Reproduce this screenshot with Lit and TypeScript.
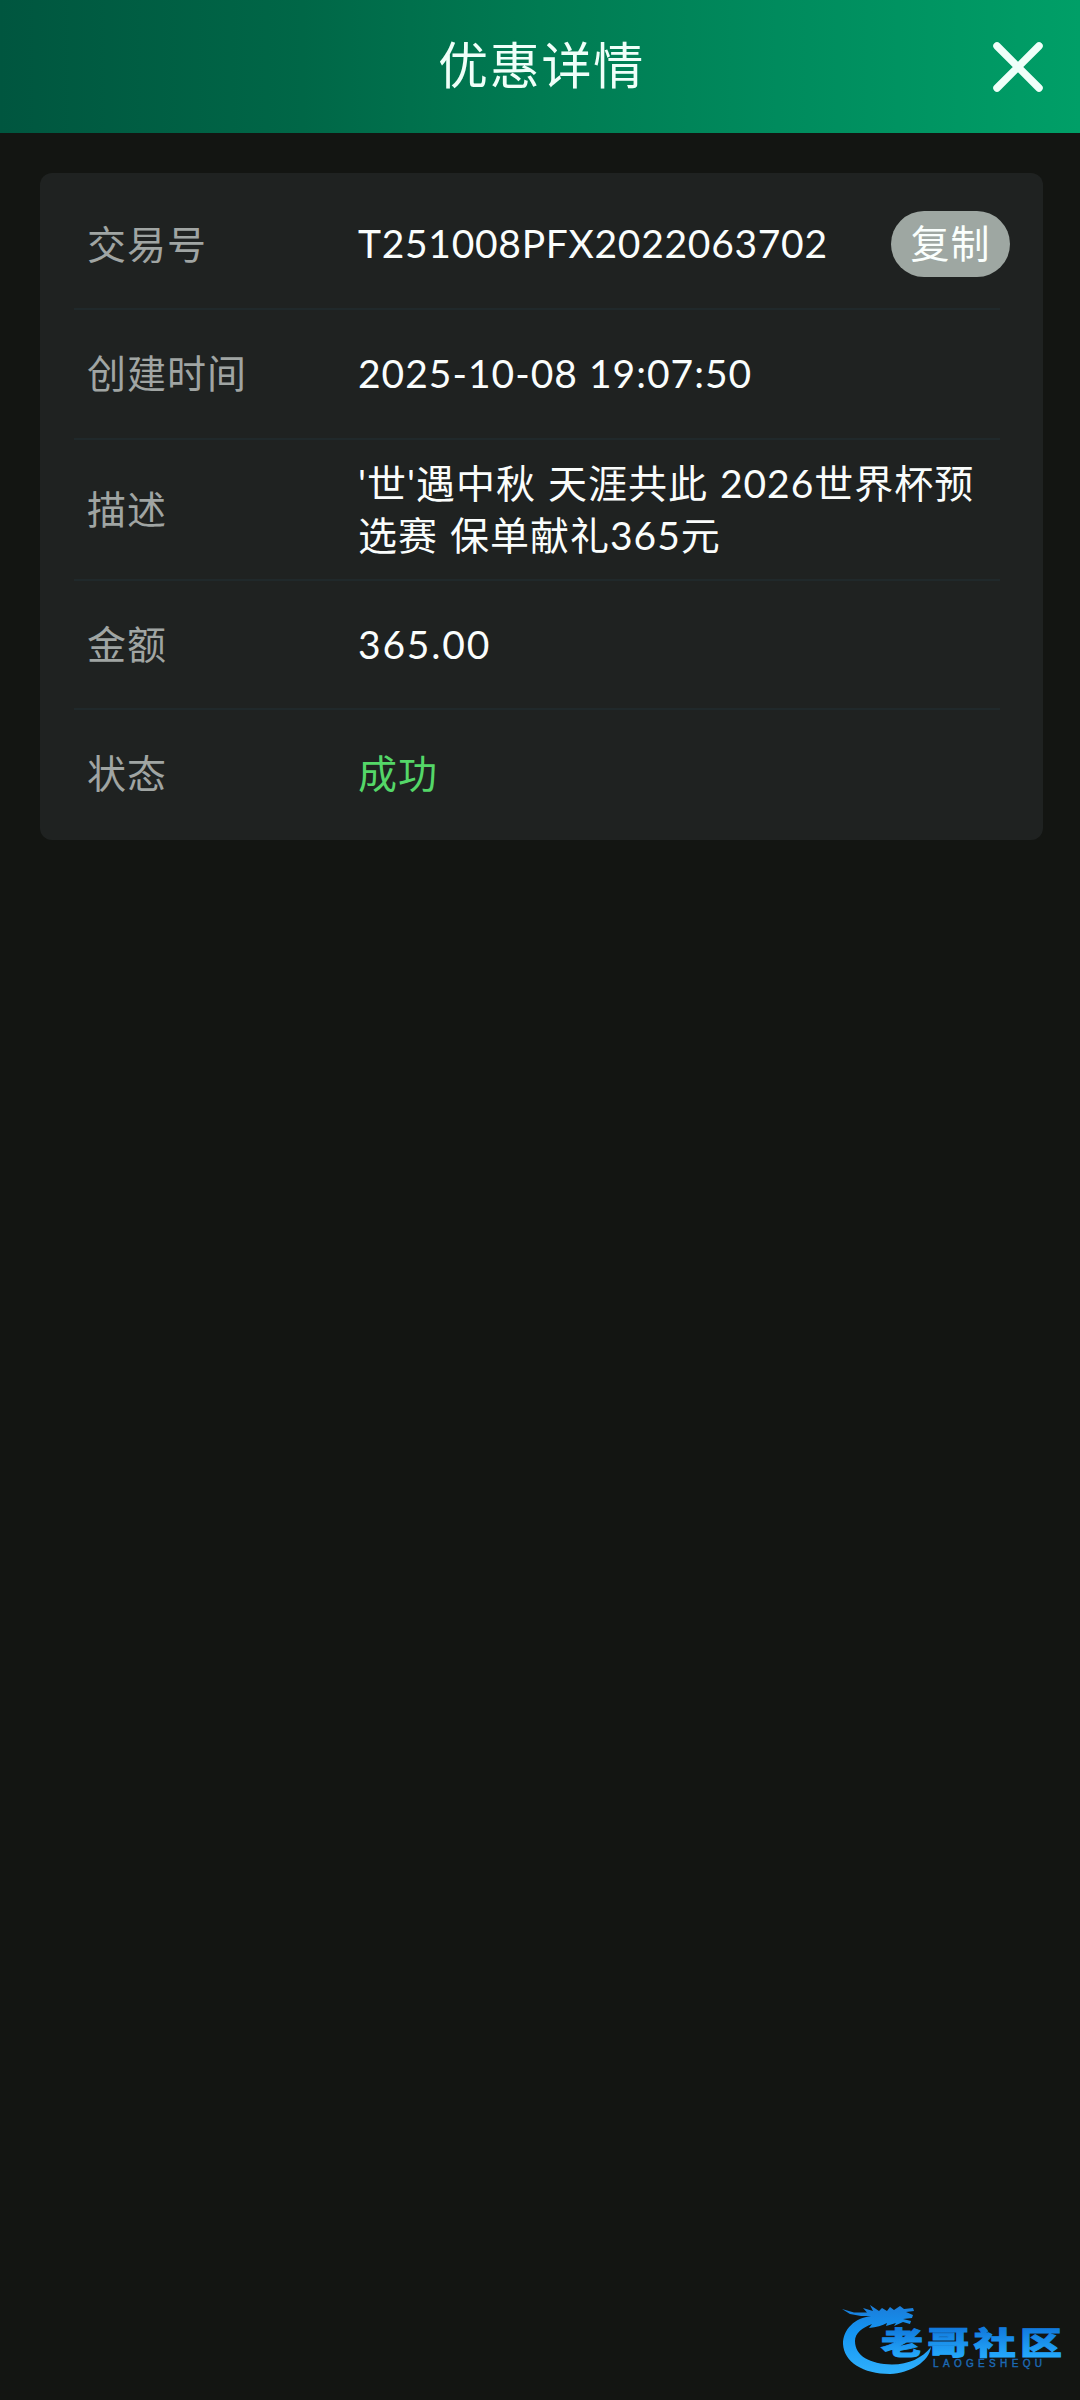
import { LitElement, html, css } from "lit";
import { customElement, property } from "lit/decorators.js";

@customElement("detail-row")
class DetailRow extends LitElement {
  @property() label = "";

  static styles = css`
    :host {
      display: grid;
      grid-template-columns: 271px 1fr;
      align-items: center;
      box-sizing: border-box;
      min-height: 129.5px;
      margin: 0 43px 0 34px;
      padding: 0 0 1px 13px;
      border-bottom: 2px solid #20292b;
    }
    :host(:last-of-type) {
      border-bottom-color: transparent;
    }
    .label {
      color: #a0a5a3;
    }
    .value {
      color: #fafdfc;
    }
  `;

  render() {
    return html`<span class="label">${this.label}</span>
      <div class="value"><slot></slot></div>`;
  }
}

@customElement("site-watermark")
class SiteWatermark extends LitElement {
  static styles = css`
    :host {
      display: block;
      width: 250px;
      height: 110px;
    }
    .name {
      font: 900 42px "Noto Sans CJK SC", sans-serif;
    }
    .latin {
      font: 400 10px "Liberation Sans", sans-serif;
    }
  `;

  render() {
    return html`<svg width="250" height="110" viewBox="0 0 250 110">
      <defs>
        <linearGradient id="blue" gradientUnits="userSpaceOnUse" x1="0" y1="18" x2="0" y2="84">
          <stop offset="0" stop-color="#1a7fdc" />
          <stop offset="0.35" stop-color="#1494f2" />
          <stop offset="1" stop-color="#2fb0fc" />
        </linearGradient>
        <linearGradient id="ink" gradientUnits="userSpaceOnUse" x1="0" y1="-32" x2="0" y2="4">
          <stop offset="0" stop-color="#127cdf" />
          <stop offset="1" stop-color="#24a8fa" />
        </linearGradient>
      </defs>
      <path fill="url(#blue)" d="M41 26 C25 28 13 39 13 54 C14 72 33 84 60 84 C80 83 99 72 101 57 C92 68 79 74.500 62 74.500 C40 74 25 66 25 51 C25 43 32 38 42 34 L39 38 Q50 37 57 33 L56 36 66 33 64 36 73 32 80 34 81 31 73 29 82 28 83 25 76 22 84 21 83 18 74 19 70 16 64 20 60 17 57 21 52 18 49 21 40 15 43 21 33 18 37 22.500 24 22.500 12 19 20 24 31 26 Z" />
      <text class="name" fill="url(#ink)" stroke="url(#ink)" stroke-width="1.2" transform="translate(51 63.5) scale(1 .74)" textLength="182" lengthAdjust="spacing">老哥社区</text>
      <text class="latin" fill="#1c69b4" stroke="#1c69b4" stroke-width="0.4" x="103" y="77" textLength="110" lengthAdjust="spacing">LAOGESHEQU</text>
    </svg>`;
  }
}

@customElement("app-root")
class AppRoot extends LitElement {
  static styles = css`
    :host {
      display: flex;
      flex-direction: column;
      position: relative;
      box-sizing: border-box;
      width: 1080px;
      height: 2400px;
      overflow: hidden;
      background: #131512;
      font: 400 39px/52px Lato, "Noto Sans CJK SC", sans-serif;
      letter-spacing: 1px;
    }
    .header {
      display: grid;
      grid-template-columns: 112px 1fr 112px;
      align-items: center;
      height: 133px;
      background: linear-gradient(90deg, #00563f, #006747 28%, #007b52 50%, #008b5d 72%, #009f67);
    }
    .title {
      grid-column: 2;
      margin: -3px 0 0;
      padding-left: 3px;
      text-align: center;
      color: #effff9;
      font-size: 50px;
      font-weight: 400;
      line-height: 68px;
      letter-spacing: 1.7px;
    }
    .close {
      display: flex;
      justify-content: flex-end;
      padding: 0 37px 0 0;
      border: 0;
      background: none;
    }
    .card {
      margin: 40px 37px 0 40px;
      border-radius: 12px;
      background: #1f2221;
      padding-top: 7.5px;
    }
    .trade {
      display: flex;
      align-items: center;
      justify-content: space-between;
      margin: 1px -10px 0 0;
    }
    .id {
      margin-top: -2px;
      letter-spacing: 0.7px;
    }
    .copy {
      width: 119px;
      height: 66px;
      padding: 0 0 3px;
      border: 0;
      border-radius: 33px;
      background: #9ea7a2;
      color: #fafffd;
      font: inherit;
      letter-spacing: 1px;
    }
    .desc {
      min-height: 141px;
      word-spacing: 1px;
    }
    .amount {
      letter-spacing: 1.8px;
    }
    .ok {
      color: #54d768;
    }
    .mark {
      position: absolute;
      left: 830px;
      top: 2290px;
    }
  `;

  render() {
    return html`
      <header class="header">
        <h1 class="title">优惠详情</h1>
        <button class="close" aria-label="关闭">
          <svg width="50" height="50" viewBox="0 0 50 50" fill="none" stroke="#effff9" stroke-width="7.5" stroke-linecap="round">
            <path d="M4 4 46 46M46 4 4 46" />
          </svg>
        </button>
      </header>
      <main class="card">
        <detail-row label="交易号">
          <div class="trade">
            <span class="id">T251008PFX2022063702</span>
            <button class="copy">复制</button>
          </div>
        </detail-row>
        <detail-row label="创建时间">2025-10-08 19:07:50</detail-row>
        <detail-row class="desc" label="描述">'世'遇中秋 天涯共此 2026世界杯预选赛 保单献礼365元</detail-row>
        <detail-row label="金额"><span class="amount">365.00</span></detail-row>
        <detail-row label="状态"><span class="ok">成功</span></detail-row>
      </main>
      <site-watermark class="mark"></site-watermark>
    `;
  }
}
